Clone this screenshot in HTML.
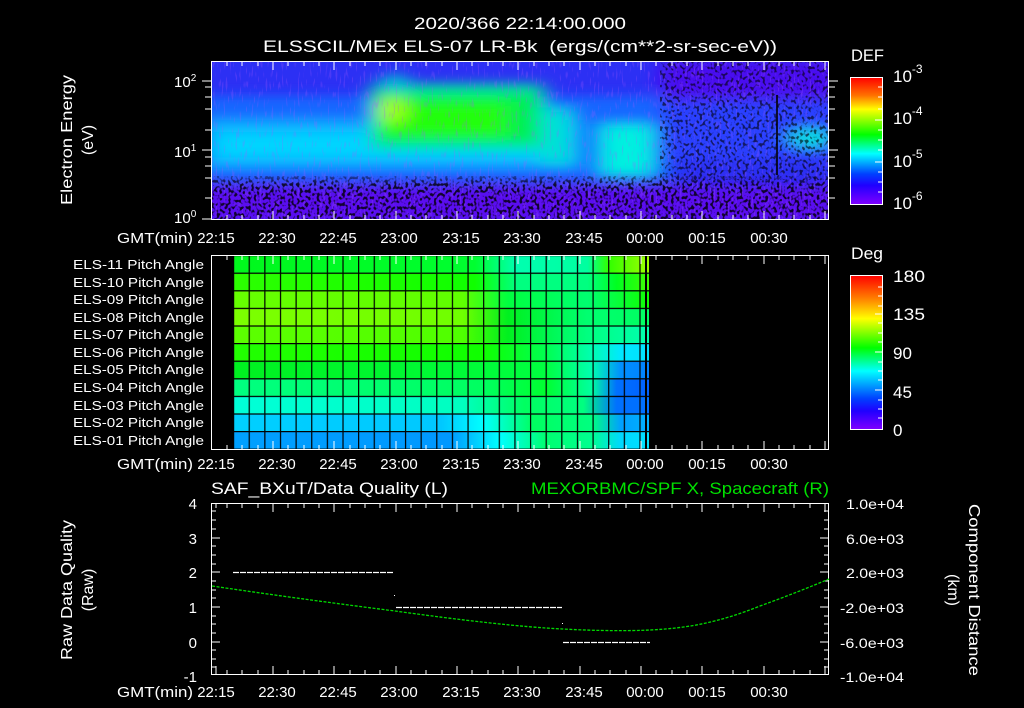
<!DOCTYPE html>
<html><head><meta charset="utf-8"><style>
html,body{margin:0;padding:0;background:#000;width:1024px;height:708px;overflow:hidden}
svg{display:block}
text{font-family:"Liberation Sans",sans-serif;fill:#fff}
</style></head><body>
<svg width="1024" height="708" viewBox="0 0 1024 708" xmlns="http://www.w3.org/2000/svg">
<defs>
<linearGradient id="defbar" x1="0" y1="0" x2="0" y2="1">
<stop offset="0" stop-color="#ff0000"/><stop offset=".14" stop-color="#ff7000"/><stop offset=".25" stop-color="#ffff00"/><stop offset=".45" stop-color="#00ff00"/><stop offset=".6" stop-color="#00ffff"/><stop offset=".76" stop-color="#0040ff"/><stop offset=".85" stop-color="#2000ff"/><stop offset="1" stop-color="#8000ff"/>
</linearGradient>
<linearGradient id="degbar" x1="0" y1="0" x2="0" y2="1">
<stop offset="0" stop-color="#ff0000"/><stop offset=".15" stop-color="#ff8000"/><stop offset=".28" stop-color="#ffff00"/><stop offset=".47" stop-color="#00ff00"/><stop offset=".62" stop-color="#00ffff"/><stop offset=".8" stop-color="#0040ff"/><stop offset=".88" stop-color="#2000ff"/><stop offset="1" stop-color="#8000ff"/>
</linearGradient>
<filter id="blur" filterUnits="userSpaceOnUse" x="150" y="20" width="750" height="250"><feGaussianBlur stdDeviation="10 6"/></filter>
<filter id="spkB" filterUnits="userSpaceOnUse" x="212" y="176" width="616" height="43">
<feTurbulence type="fractalNoise" baseFrequency="0.35 0.3" numOctaves="1" seed="4"/>
<feColorMatrix type="matrix" values="0 0 0 0 0  0 0 0 0 0  0 0 0 0 0  8 0 0 0 -4.0"/>
</filter>
<filter id="spkR" filterUnits="userSpaceOnUse" x="660" y="62" width="168" height="118">
<feTurbulence type="fractalNoise" baseFrequency="0.35 0.3" numOctaves="1" seed="7"/>
<feColorMatrix type="matrix" values="0 0 0 0 0  0 0 0 0 0  0 0 0 0 0  8 0 0 0 -4.2"/>
</filter>
<filter id="spk2" filterUnits="userSpaceOnUse" x="212" y="62" width="616" height="157">
<feTurbulence type="fractalNoise" baseFrequency="0.5 0.1" numOctaves="1" seed="9"/>
<feColorMatrix type="matrix" values="0 0 0 0 0.4  0 0 0 0 0.1  0 0 0 0 1  8 0 0 0 -4.6"/>
</filter>
<linearGradient id="fadeB" x1="0" y1="0" x2="0" y2="1"><stop offset="0" stop-color="#fff" stop-opacity="0"/><stop offset=".3" stop-color="#fff" stop-opacity="1"/></linearGradient>
<mask id="mB"><rect x="212" y="170" width="616" height="49" fill="url(#fadeB)"/></mask>
<clipPath id="topclip"><rect x="212" y="62" width="616" height="157"/></clipPath>
<pattern id="vgrid" x="233" y="0" width="15.63" height="10" patternUnits="userSpaceOnUse"><rect x="0" y="0" width="1.2" height="10" fill="#000"/></pattern>
<pattern id="hgrid" x="0" y="255" width="10" height="17.6" patternUnits="userSpaceOnUse"><rect x="0" y="0" width="10" height="1.2" fill="#000"/></pattern>
<linearGradient id="r1" x1="233" x2="650" gradientUnits="userSpaceOnUse"><stop offset="0" stop-color="#00f81c"/><stop offset=".58" stop-color="#00ff30"/><stop offset=".68" stop-color="#00ffb0"/><stop offset=".85" stop-color="#00ffa0"/><stop offset=".9" stop-color="#30ff00"/><stop offset="1" stop-color="#a0ff00"/></linearGradient>
<linearGradient id="r2" x1="233" x2="650" gradientUnits="userSpaceOnUse"><stop offset="0" stop-color="#2cff00"/><stop offset=".58" stop-color="#10ff00"/><stop offset=".68" stop-color="#00ff80"/><stop offset=".85" stop-color="#00ff80"/><stop offset=".92" stop-color="#00ff20"/><stop offset="1" stop-color="#40ff00"/></linearGradient>
<linearGradient id="r3" x1="233" x2="650" gradientUnits="userSpaceOnUse"><stop offset="0" stop-color="#66ff00"/><stop offset=".55" stop-color="#60ff00"/><stop offset=".66" stop-color="#00ff40"/><stop offset=".85" stop-color="#00ff70"/><stop offset="1" stop-color="#10ff00"/></linearGradient>
<linearGradient id="r4" x1="233" x2="650" gradientUnits="userSpaceOnUse"><stop offset="0" stop-color="#7cff00"/><stop offset=".55" stop-color="#70ff00"/><stop offset=".66" stop-color="#00f020"/><stop offset=".85" stop-color="#00ff70"/><stop offset="1" stop-color="#00ff60"/></linearGradient>
<linearGradient id="r5" x1="233" x2="650" gradientUnits="userSpaceOnUse"><stop offset="0" stop-color="#5cff00"/><stop offset=".55" stop-color="#50ff00"/><stop offset=".66" stop-color="#00f020"/><stop offset=".85" stop-color="#00ff80"/><stop offset="1" stop-color="#00ffb0"/></linearGradient>
<linearGradient id="r6" x1="233" x2="650" gradientUnits="userSpaceOnUse"><stop offset="0" stop-color="#22ff00"/><stop offset=".6" stop-color="#10ff00"/><stop offset=".75" stop-color="#00ff50"/><stop offset=".86" stop-color="#00ffb0"/><stop offset=".93" stop-color="#00e8ff"/><stop offset="1" stop-color="#00e0ff"/></linearGradient>
<linearGradient id="r7" x1="233" x2="650" gradientUnits="userSpaceOnUse"><stop offset="0" stop-color="#00f020"/><stop offset=".75" stop-color="#00ff40"/><stop offset=".86" stop-color="#00ffb0"/><stop offset=".93" stop-color="#0090ff"/><stop offset="1" stop-color="#0080ff"/></linearGradient>
<linearGradient id="r8" x1="233" x2="650" gradientUnits="userSpaceOnUse"><stop offset="0" stop-color="#00ff80"/><stop offset=".6" stop-color="#00ff60"/><stop offset=".75" stop-color="#00ff30"/><stop offset=".86" stop-color="#00ffa0"/><stop offset=".92" stop-color="#0070ff"/><stop offset="1" stop-color="#0060ff"/></linearGradient>
<linearGradient id="r9" x1="233" x2="650" gradientUnits="userSpaceOnUse"><stop offset="0" stop-color="#00ffd8"/><stop offset=".55" stop-color="#00ffc0"/><stop offset=".7" stop-color="#00ff60"/><stop offset=".84" stop-color="#00ff80"/><stop offset=".92" stop-color="#0070ff"/><stop offset="1" stop-color="#0070ff"/></linearGradient>
<linearGradient id="r10" x1="233" x2="650" gradientUnits="userSpaceOnUse"><stop offset="0" stop-color="#00d0ff"/><stop offset=".5" stop-color="#00c8ff"/><stop offset=".6" stop-color="#00ffff"/><stop offset=".72" stop-color="#00ff60"/><stop offset=".86" stop-color="#00ff80"/><stop offset=".93" stop-color="#00a0ff"/><stop offset="1" stop-color="#00b0ff"/></linearGradient>
<linearGradient id="r11" x1="233" x2="650" gradientUnits="userSpaceOnUse"><stop offset="0" stop-color="#00a0ff"/><stop offset=".52" stop-color="#0098ff"/><stop offset=".64" stop-color="#00ffff"/><stop offset=".75" stop-color="#00ff70"/><stop offset=".86" stop-color="#00ff90"/><stop offset=".93" stop-color="#00d8ff"/><stop offset="1" stop-color="#00e0ff"/></linearGradient>
</defs>

<!-- titles -->
<text x="520" y="29" font-size="17" text-anchor="middle" textLength="212" lengthAdjust="spacingAndGlyphs">2020/366 22:14:00.000</text>
<text x="520" y="52" font-size="17" text-anchor="middle" xml:space="preserve" textLength="514" lengthAdjust="spacingAndGlyphs">ELSSCIL/MEx ELS-07 LR-Bk  (ergs/(cm**2-sr-sec-eV))</text>

<!-- spectrogram -->
<g clip-path="url(#topclip)">
<rect x="212" y="62" width="616" height="157" fill="#2c30f4"/>
<g filter="url(#blur)">
<rect x="200" y="96" width="470" height="84" fill="#1868ff"/>
<rect x="660" y="100" width="180" height="60" fill="#2a40ff"/>
<rect x="200" y="120" width="380" height="48" fill="#10b0ff"/>
<rect x="215" y="132" width="340" height="26" fill="#00d8ff" opacity=".9"/>
<rect x="372" y="84" width="172" height="66" fill="#00e8a0"/>
<rect x="374" y="94" width="165" height="48" fill="#00f050"/>
<rect x="378" y="102" width="130" height="34" fill="#20ff10"/>
<ellipse cx="392" cy="110" rx="14" ry="14" fill="#a0ff20"/>
<ellipse cx="395" cy="84" rx="14" ry="10" fill="#00c8d0"/>
<rect x="540" y="108" width="32" height="56" fill="#00e0d8"/>
<rect x="600" y="124" width="54" height="52" fill="#00f0e0"/>
<ellipse cx="810" cy="138" rx="22" ry="10" fill="#00e0e0"/>
<rect x="200" y="185" width="640" height="40" fill="#5a10f0"/>
<rect x="660" y="60" width="180" height="40" fill="#4a10f0"/>
</g>
<rect x="212" y="62" width="616" height="157" fill="#000" filter="url(#spk2)" opacity=".25"/>
<g mask="url(#mB)"><rect x="212" y="176" width="616" height="43" filter="url(#spkB)" opacity=".8"/></g>
<rect x="660" y="62" width="168" height="118" filter="url(#spkR)" opacity=".6"/>
<rect x="776" y="95" width="2" height="80" fill="#000" opacity=".8"/>
</g>
<rect x="211.5" y="61.5" width="617" height="158" fill="none" stroke="#fff"/>

<!-- pitch angle panel -->
<rect x="211.5" y="255.5" width="617" height="194" fill="#000" stroke="#fff"/>
<rect x="233" y="256" width="417" height="17.6" fill="url(#r1)"/>
<rect x="233" y="273.6" width="417" height="17.6" fill="url(#r2)"/>
<rect x="233" y="291.2" width="417" height="17.6" fill="url(#r3)"/>
<rect x="233" y="308.8" width="417" height="17.6" fill="url(#r4)"/>
<rect x="233" y="326.4" width="417" height="17.6" fill="url(#r5)"/>
<rect x="233" y="344" width="417" height="17.6" fill="url(#r6)"/>
<rect x="233" y="361.6" width="417" height="17.6" fill="url(#r7)"/>
<rect x="233" y="379.2" width="417" height="17.6" fill="url(#r8)"/>
<rect x="233" y="396.8" width="417" height="17.6" fill="url(#r9)"/>
<rect x="233" y="414.4" width="417" height="17.6" fill="url(#r10)"/>
<rect x="233" y="432" width="417" height="17" fill="url(#r11)"/>
<rect x="233" y="256" width="417" height="193" fill="url(#vgrid)"/>
<rect x="233" y="256" width="417" height="193" fill="url(#hgrid)"/>
<rect x="645" y="256" width="2" height="193" fill="#000"/>
<rect x="649" y="256" width="1.5" height="193" fill="#000"/>

<!-- bottom panel -->
<rect x="211.5" y="503.5" width="617" height="171" fill="none" stroke="#fff"/>

<!-- ticks -->
<path stroke="#fff" fill="none" d="
M227,62v4M242,62v4M258,62v4M273,62v8M288,62v4M304,62v4M319,62v4M334,62v8M350,62v4M365,62v4M380,62v4M396,62v8M411,62v4M426,62v4M442,62v4M457,62v8M472,62v4M488,62v4M503,62v4M518,62v8M534,62v4M549,62v4M564,62v4M580,62v8M595,62v4M610,62v4M626,62v4M641,62v8M656,62v4M672,62v4M687,62v4M702,62v8M718,62v4M733,62v4M748,62v4M764,62v8M779,62v4M794,62v4M810,62v4M825,62v8
M227,219v-4M242,219v-4M258,219v-4M273,219v-8M288,219v-4M304,219v-4M319,219v-4M334,219v-8M350,219v-4M365,219v-4M380,219v-4M396,219v-8M411,219v-4M426,219v-4M442,219v-4M457,219v-8M472,219v-4M488,219v-4M503,219v-4M518,219v-8M534,219v-4M549,219v-4M564,219v-4M580,219v-8M595,219v-4M610,219v-4M626,219v-4M641,219v-8M656,219v-4M672,219v-4M687,219v-4M702,219v-8M718,219v-4M733,219v-4M748,219v-4M764,219v-8M779,219v-4M794,219v-4M810,219v-4M825,219v-8
M202,81h10M205,87h7M205,97h7M205,109h7M205,130h7M202,150h10M205,157h7M205,166h7M205,178h7M205,198h7M202,219h10
M828,81h10M828,87h7M828,97h7M828,109h7M828,130h7M828,150h10M828,157h7M828,166h7M828,178h7M828,198h7
M227,256v4M242,256v4M258,256v4M273,256v8M288,256v4M304,256v4M319,256v4M334,256v8M350,256v4M365,256v4M380,256v4M396,256v8M411,256v4M426,256v4M442,256v4M457,256v8M472,256v4M488,256v4M503,256v4M518,256v8M534,256v4M549,256v4M564,256v4M580,256v8M595,256v4M610,256v4M626,256v4M641,256v8M656,256v4M672,256v4M687,256v4M702,256v8M718,256v4M733,256v4M748,256v4M764,256v8M779,256v4M794,256v4M810,256v4M825,256v8
M227,449v-4M242,449v-4M258,449v-4M273,449v-8M288,449v-4M304,449v-4M319,449v-4M334,449v-8M350,449v-4M365,449v-4M380,449v-4M396,449v-8M411,449v-4M426,449v-4M442,449v-4M457,449v-8M472,449v-4M488,449v-4M503,449v-4M518,449v-8M534,449v-4M549,449v-4M564,449v-4M580,449v-8M595,449v-4M610,449v-4M626,449v-4M641,449v-8M656,449v-4M672,449v-4M687,449v-4M702,449v-8M718,449v-4M733,449v-4M748,449v-4M764,449v-8M779,449v-4M794,449v-4M810,449v-4M825,449v-8
M216,504v4M227,504v4M242,504v4M258,504v4M273,504v8M288,504v4M304,504v4M319,504v4M334,504v8M350,504v4M365,504v4M380,504v4M396,504v8M411,504v4M426,504v4M442,504v4M457,504v8M472,504v4M488,504v4M503,504v4M518,504v8M534,504v4M549,504v4M564,504v4M580,504v8M595,504v4M610,504v4M626,504v4M641,504v8M656,504v4M672,504v4M687,504v4M702,504v8M718,504v4M733,504v4M748,504v4M764,504v8M779,504v4M794,504v4M810,504v4M825,504v8
M216,674v-8M227,674v-4M242,674v-4M258,674v-4M273,674v-8M288,674v-4M304,674v-4M319,674v-4M334,674v-8M350,674v-4M365,674v-4M380,674v-4M396,674v-8M411,674v-4M426,674v-4M442,674v-4M457,674v-8M472,674v-4M488,674v-4M503,674v-4M518,674v-8M534,674v-4M549,674v-4M564,674v-4M580,674v-8M595,674v-4M610,674v-4M626,674v-4M641,674v-8M656,674v-4M672,674v-4M687,674v-4M702,674v-8M718,674v-4M733,674v-4M748,674v-4M764,674v-8M779,674v-4M794,674v-4M810,674v-4M825,674v-8
M212,538h8M212,572h8M212,607h8M212,642h8M212,511h4M212,520h4M212,529h4M212,546h4M212,555h4M212,564h4M212,581h4M212,590h4M212,598h4M212,616h4M212,624h4M212,633h4M212,650h4M212,659h4M212,667h4
M828,538h-8M828,572h-8M828,607h-8M828,642h-8M828,511h-4M828,520h-4M828,529h-4M828,546h-4M828,555h-4M828,564h-4M828,581h-4M828,590h-4M828,598h-4M828,616h-4M828,624h-4M828,633h-4M828,650h-4M828,659h-4M828,667h-4
"/>

<!-- colorbars -->
<rect x="850.5" y="77.5" width="32" height="127" fill="url(#defbar)" stroke="#fff"/>
<rect x="850.5" y="275.5" width="32" height="154" fill="url(#degbar)" stroke="#fff"/>
<path stroke="#fff" d="M882,87h-4M882,97h-4M882,109h-4M882,120h-7M882,130h-4M882,140h-4M882,150h-4M882,162h-7M882,172h-4M882,182h-4M882,192h-4M882,287h-4M882,296h-4M882,306h-4M882,314h-7M882,323h-4M882,333h-4M882,342h-4M882,352h-7M882,362h-4M882,371h-4M882,380h-4M882,390h-7M882,400h-4M882,409h-4M882,418h-4"/>
<text x="851" y="61" font-size="17" textLength="33" lengthAdjust="spacingAndGlyphs">DEF</text>
<g font-size="17">
<text x="893" y="82">10<tspan font-size="12" dy="-9">-3</tspan></text>
<text x="893" y="124">10<tspan font-size="12" dy="-9">-4</tspan></text>
<text x="893" y="167">10<tspan font-size="12" dy="-9">-5</tspan></text>
<text x="893" y="209">10<tspan font-size="12" dy="-9">-6</tspan></text>
</g>
<text x="851" y="259" font-size="17" textLength="32" lengthAdjust="spacingAndGlyphs">Deg</text>
<g font-size="17">
<text x="893" y="282" textLength="32" lengthAdjust="spacingAndGlyphs">180</text><text x="893" y="320" textLength="32" lengthAdjust="spacingAndGlyphs">135</text><text x="893" y="359">90</text><text x="893" y="398">45</text><text x="893" y="436">0</text>
</g>

<!-- top panel axis labels -->
<g font-size="15">
<text x="174" y="87">10<tspan font-size="10" dy="-6">2</tspan></text>
<text x="174" y="157">10<tspan font-size="10" dy="-6">1</tspan></text>
<text x="174" y="223">10<tspan font-size="10" dy="-6">0</tspan></text>
</g>
<text transform="translate(72,140) rotate(-90)" font-size="16" text-anchor="middle" textLength="130" lengthAdjust="spacingAndGlyphs">Electron Energy</text>
<text transform="translate(93,140) rotate(-90)" font-size="16" text-anchor="middle">(eV)</text>

<g font-size="15" text-anchor="middle">
<text x="155" y="243" textLength="76" lengthAdjust="spacingAndGlyphs">GMT(min)</text>
<text x="216" y="243">22:15</text><text x="277" y="243">22:30</text><text x="338" y="243">22:45</text><text x="399" y="243">23:00</text><text x="461" y="243">23:15</text><text x="522" y="243">23:30</text><text x="584" y="243">23:45</text><text x="645" y="243">00:00</text><text x="707" y="243">00:15</text><text x="769" y="243">00:30</text>
<text x="155" y="469" textLength="76" lengthAdjust="spacingAndGlyphs">GMT(min)</text>
<text x="216" y="469">22:15</text><text x="277" y="469">22:30</text><text x="338" y="469">22:45</text><text x="399" y="469">23:00</text><text x="461" y="469">23:15</text><text x="522" y="469">23:30</text><text x="584" y="469">23:45</text><text x="645" y="469">00:00</text><text x="707" y="469">00:15</text><text x="769" y="469">00:30</text>
<text x="155" y="697" textLength="76" lengthAdjust="spacingAndGlyphs">GMT(min)</text>
<text x="216" y="697">22:15</text><text x="277" y="697">22:30</text><text x="338" y="697">22:45</text><text x="399" y="697">23:00</text><text x="461" y="697">23:15</text><text x="522" y="697">23:30</text><text x="584" y="697">23:45</text><text x="645" y="697">00:00</text><text x="707" y="697">00:15</text><text x="769" y="697">00:30</text>
</g>

<!-- pitch labels -->
<g font-size="13" text-anchor="end">
<text x="204" y="269" textLength="131" lengthAdjust="spacingAndGlyphs">ELS-11 Pitch Angle</text>
<text x="204" y="287" textLength="131" lengthAdjust="spacingAndGlyphs">ELS-10 Pitch Angle</text>
<text x="204" y="304" textLength="131" lengthAdjust="spacingAndGlyphs">ELS-09 Pitch Angle</text>
<text x="204" y="322" textLength="131" lengthAdjust="spacingAndGlyphs">ELS-08 Pitch Angle</text>
<text x="204" y="339" textLength="131" lengthAdjust="spacingAndGlyphs">ELS-07 Pitch Angle</text>
<text x="204" y="357" textLength="131" lengthAdjust="spacingAndGlyphs">ELS-06 Pitch Angle</text>
<text x="204" y="374" textLength="131" lengthAdjust="spacingAndGlyphs">ELS-05 Pitch Angle</text>
<text x="204" y="392" textLength="131" lengthAdjust="spacingAndGlyphs">ELS-04 Pitch Angle</text>
<text x="204" y="410" textLength="131" lengthAdjust="spacingAndGlyphs">ELS-03 Pitch Angle</text>
<text x="204" y="427" textLength="131" lengthAdjust="spacingAndGlyphs">ELS-02 Pitch Angle</text>
<text x="204" y="445" textLength="131" lengthAdjust="spacingAndGlyphs">ELS-01 Pitch Angle</text>
</g>

<!-- bottom panel text -->
<text x="211" y="494" font-size="17" textLength="237" lengthAdjust="spacingAndGlyphs">SAF_BXuT/Data Quality (L)</text>
<text x="829" y="494" font-size="17" text-anchor="end" style="fill:#00e000" textLength="298" lengthAdjust="spacingAndGlyphs">MEXORBMC/SPF X, Spacecraft (R)</text>
<g font-size="15" text-anchor="end">
<text x="197" y="509">4</text><text x="197" y="544">3</text><text x="197" y="578">2</text><text x="197" y="613">1</text><text x="197" y="648">0</text><text x="197" y="682">-1</text>
</g>
<g font-size="14">
<text x="846" y="509" textLength="58" lengthAdjust="spacingAndGlyphs">1.0e+04</text><text x="846" y="544" textLength="58" lengthAdjust="spacingAndGlyphs">6.0e+03</text><text x="846" y="578" textLength="58" lengthAdjust="spacingAndGlyphs">2.0e+03</text><text x="840" y="613" textLength="64" lengthAdjust="spacingAndGlyphs">-2.0e+03</text><text x="840" y="648" textLength="64" lengthAdjust="spacingAndGlyphs">-6.0e+03</text><text x="840" y="682" textLength="64" lengthAdjust="spacingAndGlyphs">-1.0e+04</text>
</g>
<text transform="translate(72,590) rotate(-90)" font-size="16" text-anchor="middle" textLength="140" lengthAdjust="spacingAndGlyphs">Raw Data Quality</text>
<text transform="translate(93,590) rotate(-90)" font-size="16" text-anchor="middle">(Raw)</text>
<text transform="translate(969,590) rotate(90)" font-size="16" text-anchor="middle" textLength="172" lengthAdjust="spacingAndGlyphs">Component Distance</text>
<text transform="translate(948,590) rotate(90)" font-size="16" text-anchor="middle">(km)</text>

<!-- data -->
<g stroke="#fff" stroke-width="1.2" stroke-dasharray="6 1">
<path d="M233,572.5H394"/><path d="M396,607.5H562"/><path d="M563,642.5H650"/>
</g>
<rect x="394" y="595" width="1" height="1" fill="#fff"/><rect x="562" y="623" width="1" height="1" fill="#fff"/>
<path d="M212,586 C280,596 340,604 395,611 C460,620 520,627 563,629 C600,631 630,631 650,630 C690,628 720,622 760,606 C790,595 810,587 829,579" fill="none" stroke="#00d800" stroke-width="1.3" stroke-dasharray="3 1.5"/>
</svg>
</body></html>
